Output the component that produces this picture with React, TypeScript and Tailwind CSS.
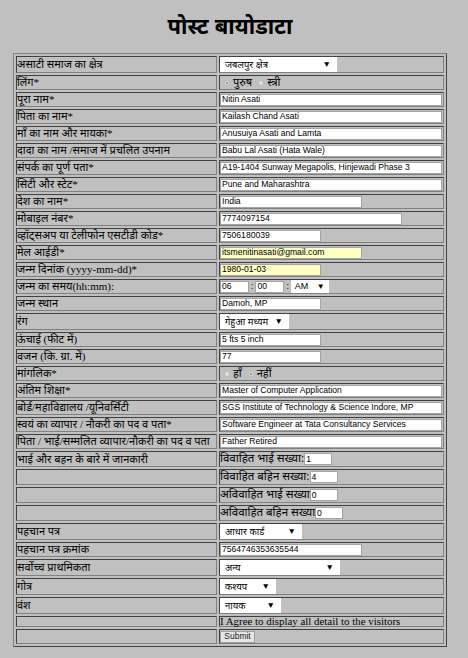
type Cell =
  | { kind: 'input'; value: string; w: string; yellow?: boolean }
  | { kind: 'select'; value: string; w: string }
  | { kind: 'radio'; options: [string, boolean][] }
  | { kind: 'time' }
  | { kind: 'count'; label: string; value: string }
  | { kind: 'agree' }
  | { kind: 'submit' };

interface Row {
  label: string;
  h: string;
  cell: Cell;
}

const FULL = 'w-[222px]';

const ROWS: Row[] = [
  { label: 'असाटी समाज का क्षेत्र', h: 'h-[17px]', cell: { kind: 'select', value: 'जबलपुर क्षेत्र', w: 'w-[117px]' } },
  { label: 'लिंग*', h: 'h-[15px]', cell: { kind: 'radio', options: [['पुरुष', true], ['स्त्री', false]] } },
  { label: 'पूरा नाम*', h: 'h-[15px]', cell: { kind: 'input', value: 'Nitin Asati', w: FULL } },
  { label: 'पिता का नाम*', h: 'h-[15px]', cell: { kind: 'input', value: 'Kailash Chand Asati', w: FULL } },
  { label: 'माँ का नाम और मायका*', h: 'h-[15px]', cell: { kind: 'input', value: 'Anusuiya Asati and Lamta', w: FULL } },
  { label: 'दादा का नाम /समाज में प्रचलित उपनाम', h: 'h-[15px]', cell: { kind: 'input', value: 'Babu Lal Asati (Hata Wale)', w: FULL } },
  { label: 'संपर्क का पूर्ण पता*', h: 'h-[15px]', cell: { kind: 'input', value: 'A19-1404 Sunway Megapolis, Hinjewadi Phase 3', w: FULL } },
  { label: 'सिटी और स्टेट*', h: 'h-[15px]', cell: { kind: 'input', value: 'Pune and Maharashtra', w: FULL } },
  { label: 'देश का नाम*', h: 'h-[15px]', cell: { kind: 'input', value: 'India', w: 'w-[142px]' } },
  { label: 'मोबाइल नंबर*', h: 'h-[15px]', cell: { kind: 'input', value: '7774097154', w: 'w-[182px]' } },
  { label: 'व्हॉट्सअप या टेलीफोन एसटीडी कोड*', h: 'h-[15px]', cell: { kind: 'input', value: '7506180039', w: 'w-[101px]' } },
  { label: 'मेल आईडी*', h: 'h-[15px]', cell: { kind: 'input', value: 'itsmenitinasati@gmail.com', w: 'w-[142px]', yellow: true } },
  { label: 'जन्म दिनांक (yyyy-mm-dd)*', h: 'h-[15px]', cell: { kind: 'input', value: '1980-01-03', w: 'w-[101px]', yellow: true } },
  { label: 'जन्म का समय(hh:mm):', h: 'h-[15px]', cell: { kind: 'time' } },
  { label: 'जन्म स्थान', h: 'h-[15px]', cell: { kind: 'input', value: 'Damoh, MP', w: 'w-[101px]' } },
  { label: 'रंग', h: 'h-[17px]', cell: { kind: 'select', value: 'गेहुआ मध्यम', w: 'w-[69px]' } },
  { label: 'ऊंचाई (फीट में)', h: 'h-[15px]', cell: { kind: 'input', value: '5 fts 5 inch', w: 'w-[101px]' } },
  { label: 'वजन (कि. ग्रा. में)', h: 'h-[15px]', cell: { kind: 'input', value: '77', w: 'w-[101px]' } },
  { label: 'मांगलिक*', h: 'h-[15px]', cell: { kind: 'radio', options: [['हाँ', false], ['नहीं', true]] } },
  { label: 'अंतिम शिक्षा*', h: 'h-[15px]', cell: { kind: 'input', value: 'Master of Computer Application', w: FULL } },
  { label: 'बोर्ड/महाविद्यालय /यूनिवर्सिटी', h: 'h-[15px]', cell: { kind: 'input', value: 'SGS Institute of Technology & Science Indore, MP', w: FULL } },
  { label: 'स्वयं का व्यापार / नौकरी का पद व पता*', h: 'h-[15px]', cell: { kind: 'input', value: 'Software Engineer at Tata Consultancy Services', w: FULL } },
  { label: 'पिता / भाई/सम्मलित व्यापार/नौकरी का पद व पता', h: 'h-[15px]', cell: { kind: 'input', value: 'Father Retired', w: FULL } },
  { label: 'भाई और बहन के बारे में जानकारी', h: 'h-[16px]', cell: { kind: 'count', label: 'विवाहित भाई सख्या:', value: '1' } },
  { label: '', h: 'h-[16px]', cell: { kind: 'count', label: 'विवाहित बहिन सख्या:', value: '4' } },
  { label: '', h: 'h-[16px]', cell: { kind: 'count', label: 'अविवाहित भाई सख्या', value: '0' } },
  { label: '', h: 'h-[16px]', cell: { kind: 'count', label: 'अविवाहित बहिन सख्या', value: '0' } },
  { label: 'पहचान पत्र', h: 'h-[17px]', cell: { kind: 'select', value: 'आधार कार्ड', w: 'w-[82px]' } },
  { label: 'पहचान पत्र क्रमांक', h: 'h-[15px]', cell: { kind: 'input', value: '7564746353635544', w: 'w-[142px]' } },
  { label: 'सर्वोच्च प्राथमिकता', h: 'h-[17px]', cell: { kind: 'select', value: 'अन्य', w: 'w-[120px]' } },
  { label: 'गोत्र', h: 'h-[17px]', cell: { kind: 'select', value: 'कश्यप', w: 'w-[56px]' } },
  { label: 'वंश', h: 'h-[17px]', cell: { kind: 'select', value: 'नायक', w: 'w-[61px]' } },
  { label: '', h: 'h-[11px]', cell: { kind: 'agree' } },
  { label: '', h: 'h-[15px]', cell: { kind: 'submit' } },
];

const SERIF = "font-['Liberation_Serif','Noto_Sans_Devanagari','Noto_Serif_Devanagari','Lohit_Devanagari','FreeSerif',serif]";
const SANS = "font-['Liberation_Sans','Noto_Sans_Devanagari','Lohit_Devanagari','FreeSans',sans-serif]";

const cellBorder =
  'border border-t-[#404040] border-l-[#404040] border-b-[#808080] border-r-[#808080]';

function TextBox({ value, w, yellow }: { value: string; w: string; yellow?: boolean }) {
  return (
    <div
      className={`${w} h-[12px] flex items-center overflow-hidden whitespace-nowrap border border-[#a4a4a4] pl-[1px] text-[8.6px] leading-none text-black ${SANS} ${
        yellow ? 'bg-[#ffffc4]' : 'bg-white'
      }`}
    >
      {value}
    </div>
  );
}

function SelectBox({ value, w }: { value: string; w: string }) {
  return (
    <div
      className={`${w} h-[15px] flex items-center justify-between bg-white pl-[5px] pr-[6px] text-[9.5px] leading-none text-black ${SANS}`}
    >
      <span className="whitespace-nowrap">{value}</span>
      <span className="text-[8.5px]">▼</span>
    </div>
  );
}

function Radio({ checked }: { checked: boolean }) {
  return (
    <span className="flex h-[6px] w-[6px] items-center justify-center rounded-full border border-[#b8b8b8] bg-[#e4e4e4]">
      {checked && <span className="h-[2px] w-[2px] rounded-full bg-[#7a7a7a]" />}
    </span>
  );
}

function RightCell({ cell }: { cell: Cell }) {
  switch (cell.kind) {
    case 'input':
      return <TextBox value={cell.value} w={cell.w} yellow={cell.yellow} />;
    case 'select':
      return <SelectBox value={cell.value} w={cell.w} />;
    case 'radio':
      return (
        <div className={`flex items-center pl-[4px] text-[11px] leading-none ${SERIF}`}>
          {cell.options.map(([text, checked]) => (
            <span key={text} className="mr-[6px] flex items-center gap-[3px]">
              <Radio checked={checked} />
              {text}
            </span>
          ))}
        </div>
      );
    case 'time':
      return (
        <div className={`flex items-center text-[8.6px] leading-none ${SANS}`}>
          <TextBox value="06" w="w-[29px]" />
          <span className="px-[2px]">:</span>
          <TextBox value="00" w="w-[29px]" />
          <span className="px-[2px]">:</span>
          <div className="flex h-[13px] w-[38px] items-center justify-between bg-white pl-[4px] pr-[4px] text-[9px]">
            <span>AM</span>
            <span className="text-[8px]">▼</span>
          </div>
        </div>
      );
    case 'count':
      return (
        <div className={`flex items-center text-[11.5px] leading-none ${SERIF}`}>
          <span className="whitespace-nowrap">{cell.label}</span>
          <TextBox value={cell.value} w="w-[28px]" />
        </div>
      );
    case 'agree':
      return (
        <div className={`whitespace-nowrap text-[10.9px] leading-none ${SERIF}`}>
          I Agree to display all detail to the visitors
        </div>
      );
    case 'submit':
      return (
        <button
          type="button"
          className={`flex h-[12px] w-[35px] items-center justify-center border border-[#a0a0a0] bg-[#e6e6e6] text-[8.5px] leading-none text-[#222] ${SANS}`}
        >
          Submit
        </button>
      );
  }
}

export default function App() {
  return (
    <div className={`min-h-[658px] w-[468px] bg-[#c0c0c0] text-black ${SERIF}`}>
      <div className="ml-[13px] w-[434px] pt-[12px] pb-[12px]">
        <h1 className={`text-center text-[22px] font-bold leading-[29px] ${SANS}`}>पोस्ट बायोडाटा</h1>
      </div>
      <div className="ml-[13px] flex w-[434px] flex-col gap-[2px] border border-t-[#808080] border-l-[#808080] border-b-[#404040] border-r-[#404040] p-[2px]">
        {ROWS.map((row, i) => (
          <div key={i} className="flex gap-[2px]">
            <div
              className={`${cellBorder} ${row.h} flex w-[201px] items-center overflow-hidden whitespace-nowrap text-[11px] leading-none`}
            >
              {row.label}
            </div>
            <div className={`${cellBorder} ${row.h} flex flex-1 items-center`}>
              <RightCell cell={row.cell} />
            </div>
          </div>
        ))}
      </div>
    </div>
  );
}
